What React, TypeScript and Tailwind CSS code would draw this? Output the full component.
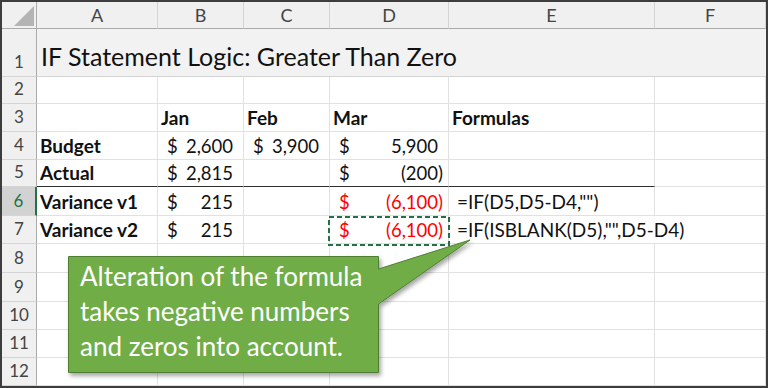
import React from "react";

type Cell = {
  text?: string;
  bold?: boolean;
  red?: boolean;
  money?: string;
  neg?: boolean;
  spill?: boolean;
  formula?: boolean;
};

const COLS = ["A", "B", "C", "D", "E", "F"];

// rows 2..12, columns A..F
const sheet: Record<number, Record<string, Cell>> = {
  3: {
    B: { text: "Jan", bold: true },
    C: { text: "Feb", bold: true },
    D: { text: "Mar", bold: true },
    E: { text: "Formulas", bold: true },
  },
  4: {
    A: { text: "Budget", bold: true },
    B: { money: "2,600" },
    C: { money: "3,900" },
    D: { money: "5,900" },
  },
  5: {
    A: { text: "Actual", bold: true },
    B: { money: "2,815" },
    D: { money: "(200)", neg: true },
  },
  6: {
    A: { text: "Variance v1", bold: true },
    B: { money: "215" },
    D: { money: "(6,100)", neg: true, red: true },
    E: { text: '=IF(D5,D5-D4,"")', formula: true },
  },
  7: {
    A: { text: "Variance v2", bold: true },
    B: { money: "215" },
    D: { money: "(6,100)", neg: true, red: true },
    E: { text: '=IF(ISBLANK(D5),"",D5-D4)', formula: true, spill: true },
  },
};

const DataCell = ({ row, col, cell }: { row: number; col: string; cell?: Cell }) => {
  const thick = row === 5 && col !== "F";
  const size = cell?.bold ? "font-bold text-[19px]" : cell?.formula ? "text-[19px]" : "text-[18.5px]";
  return (
    <div
      className={`flex items-end pb-[2px] leading-[22px] whitespace-nowrap ${
        thick ? "border-b-[1.5px] border-b-[#2f2f2f]" : "border-b border-b-[#e1e1e1]"
      } ${cell?.spill ? "relative z-10" : "border-r border-r-[#e1e1e1]"} ${
        cell?.red ? "text-[#ff0000]" : "text-[#111]"
      } ${size}`}
    >
      {cell?.text && <span className={cell.formula ? "pl-[8px]" : "pl-[3px]"}>{cell.text}</span>}
      {cell?.money && (
        <div className="flex w-full justify-between pl-[9px] pr-[5px]">
          <span>$</span>
          <span>
            {cell.money}
            {!cell.neg && <span className="invisible">)</span>}
          </span>
        </div>
      )}
    </div>
  );
};

const RowHead = ({ n }: { n: number }) => {
  const active = n === 6;
  return (
    <div
      className={`flex items-end justify-center pb-[3px] leading-[22px] text-[17px] border-b border-b-[#d4d4d4] ${
        active
          ? "bg-[#d2d2d2] text-[#217346] border-r-2 border-r-[#217346]"
          : "bg-[#f0f0f0] text-[#444] border-r border-r-[#ababab]"
      }`}
    >
      {n}
    </div>
  );
};

export default function App() {
  return (
    <div className="relative w-[768px] h-[388px] bg-[#3d3d3d] p-[2px] font-['Lato','Noto_Sans',sans-serif] overflow-hidden">
      <div className="grid h-full bg-white grid-cols-[35px_121px_86px_86px_119px_206px_111px] grid-rows-[27px_48px_27px_28px_28px_27px_29px_28px_29px_29px_28px_28px_28px]">
        {/* corner */}
        <div className="relative bg-[#f0f0f0] border-r border-b border-[#ababab]">
          <svg className="absolute left-[12px] top-[4px]" width="21" height="21" viewBox="0 0 21 21">
            <polygon points="20,0 20,20 0,20" fill="#b4b4b4" />
          </svg>
        </div>
        {COLS.map((c) => (
          <div
            key={c}
            className="flex items-center justify-center bg-[#f0f0f0] text-[18px] text-[#444] border-b border-b-[#ababab] border-r border-r-[#d4d4d4]"
          >
            {c}
          </div>
        ))}

        {/* row 1: title */}
        <RowHead n={1} />
        <div className="col-span-6 flex items-end pl-[4px] pb-[5px] leading-[30px] text-[25px] text-[#111] bg-[#f2f2f2] border-b border-b-[#d4d4d4] whitespace-nowrap">
          IF Statement Logic: Greater Than Zero
        </div>

        {Array.from({ length: 11 }, (_, i) => i + 2).map((r) => (
          <React.Fragment key={r}>
            <RowHead n={r} />
            {COLS.map((c) => (
              <DataCell key={c} row={r} col={c} cell={sheet[r]?.[c]} />
            ))}
          </React.Fragment>
        ))}
      </div>

      {/* copy marquee around D7 */}
      <svg className="absolute left-[327px] top-[215px] z-20" width="124" height="32">
        <rect x="2" y="2" width="120" height="28" fill="none" stroke="#217346" strokeWidth="2" strokeDasharray="5 3" />
      </svg>

      {/* callout */}
      <svg className="absolute left-0 top-0 z-20 pointer-events-none" width="768" height="388">
        <defs>
          <filter id="sh" x="-10%" y="-10%" width="130%" height="130%">
            <feDropShadow dx="2" dy="3" stdDeviation="2" floodColor="#000" floodOpacity="0.35" />
          </filter>
        </defs>
        <path
          d="M68.5 256.5 H378.5 V269 L470 240 L378.5 304 V372.5 H68.5 Z"
          fill="#70ad47"
          stroke="#507e32"
          strokeWidth="1"
          filter="url(#sh)"
        />
      </svg>
      <div className="absolute left-[68px] top-[256px] z-30 w-[310px] pl-[12px] pt-[3px] text-[26px] leading-[35px] text-white whitespace-nowrap">
        <div>Alteration of the formula</div>
        <div>takes negative numbers</div>
        <div>and zeros into account.</div>
      </div>
    </div>
  );
}
